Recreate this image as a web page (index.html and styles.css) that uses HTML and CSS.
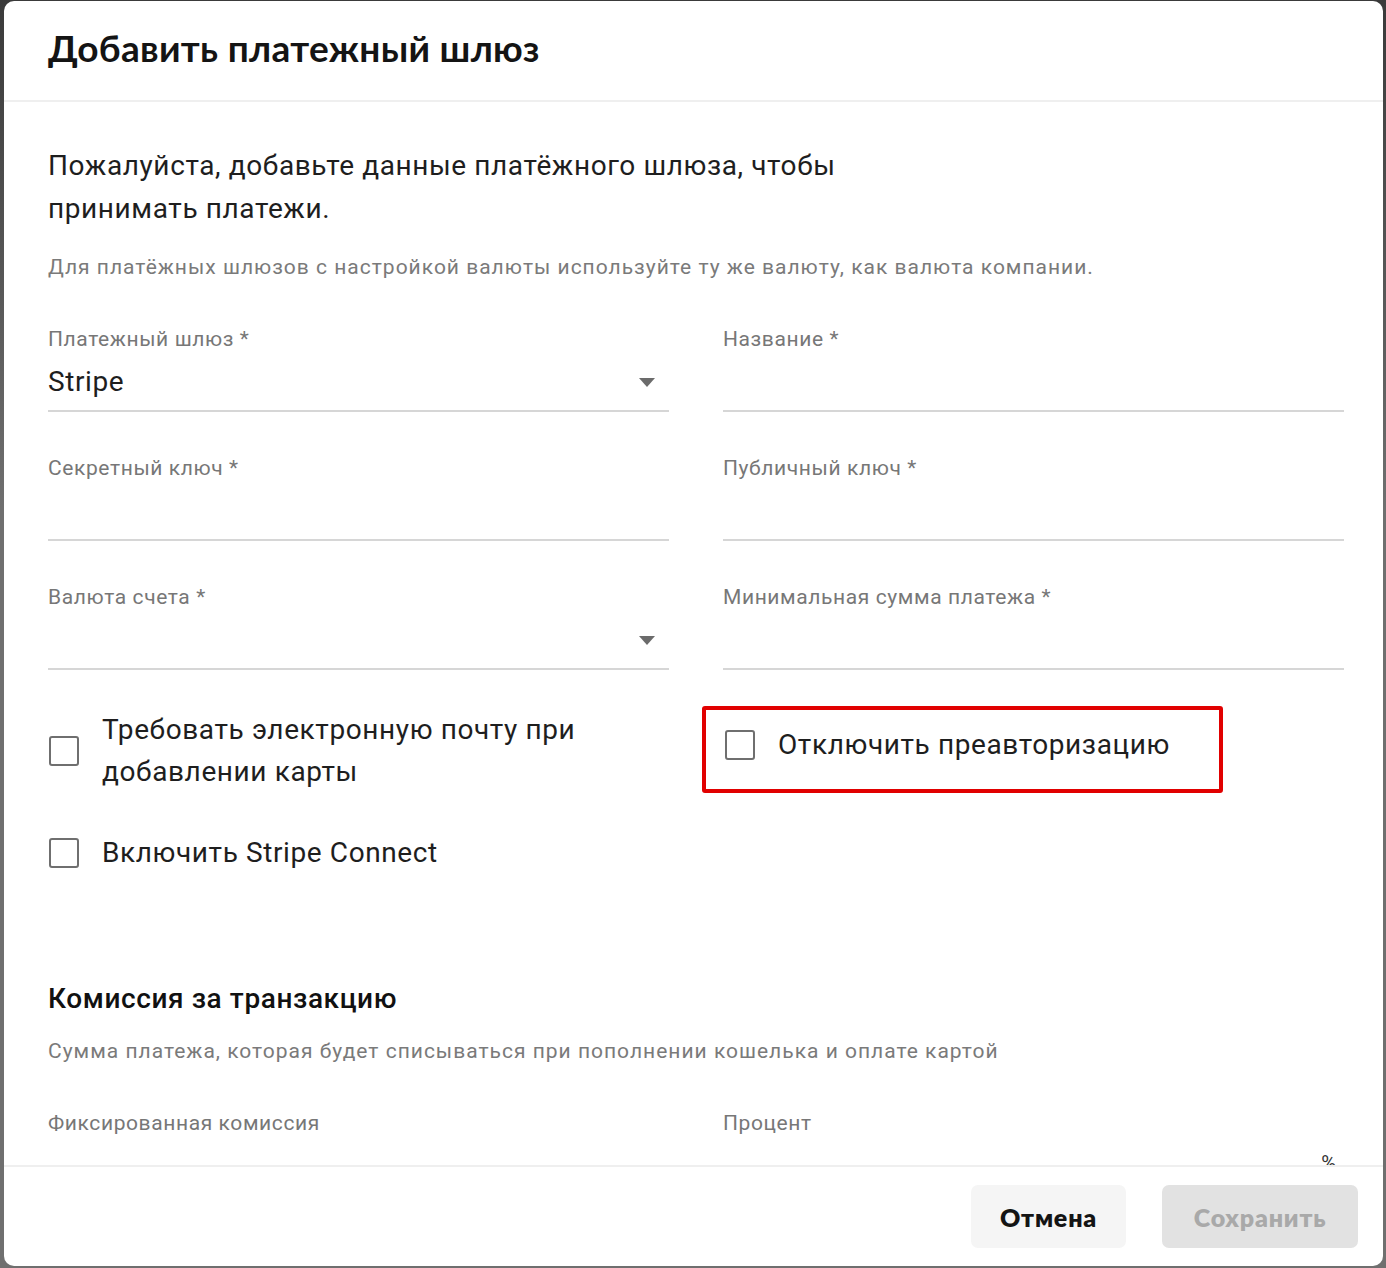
FILE: index.html
```html
<!DOCTYPE html>
<html lang="ru">
<head>
<meta charset="utf-8">
<title>Добавить платежный шлюз</title>
<link rel="stylesheet" href="styles.css">
</head>
<body>
<div class="dialog">
  <header class="dlg-head">
    <h1 class="dlg-title">Добавить платежный шлюз</h1>
  </header>
  <main class="dlg-body">
    <p class="intro">Пожалуйста, добавьте данные платёжного шлюза, чтобы<br>принимать платежи.</p>
    <p class="note">Для платёжных шлюзов с настройкой валюты используйте ту же валюту, как валюта компании.</p>

    <div class="grid fields">
      <div class="field">
        <div class="label">Платежный шлюз *</div>
        <div class="input select"><span class="value">Stripe</span><span class="caret"></span></div>
      </div>
      <div class="field">
        <div class="label">Название *</div>
        <div class="input"></div>
      </div>
      <div class="field">
        <div class="label">Секретный ключ *</div>
        <div class="input"></div>
      </div>
      <div class="field">
        <div class="label">Публичный ключ *</div>
        <div class="input"></div>
      </div>
      <div class="field">
        <div class="label">Валюта счета *</div>
        <div class="input select"><span class="value"></span><span class="caret"></span></div>
      </div>
      <div class="field">
        <div class="label">Минимальная сумма платежа *</div>
        <div class="input"></div>
      </div>
    </div>

    <div class="grid checks">
      <div class="check-col">
        <label class="check"><span class="box"></span><span class="check-text">Требовать электронную почту при<br>добавлении карты</span></label>
        <label class="check second"><span class="box"></span><span class="check-text">Включить Stripe Connect</span></label>
      </div>
      <div class="check-col">
        <div class="highlight">
          <label class="check"><span class="box"></span><span class="check-text">Отключить преавторизацию</span></label>
        </div>
      </div>
    </div>

    <h2 class="section-title">Комиссия за транзакцию</h2>
    <p class="note section-note">Сумма платежа, которая будет списываться при пополнении кошелька и оплате картой</p>

    <div class="grid fields fee">
      <div class="field">
        <div class="label">Фиксированная комиссия</div>
        <div class="input"></div>
      </div>
      <div class="field">
        <div class="label">Процент</div>
        <div class="input suffixed"><span class="suffix">%</span></div>
      </div>
    </div>
  </main>
  <footer class="dlg-foot">
    <button class="btn btn-cancel" type="button">Отмена</button>
    <button class="btn btn-save" type="button" disabled>Сохранить</button>
  </footer>
</div>
</body>
</html>
```

FILE: styles.css
```css
html, body {
  margin: 0;
  padding: 0;
}
body {
  background: linear-gradient(180deg, #3a3a3a 0%, #6f6f6f 40%, #6f6f6f 100%);
  font-family: Roboto, "Noto Sans", Arial, sans-serif;
  color: #1f1f1f;
  width: 1386px;
  height: 1268px;
  overflow: hidden;
}
.dialog {
  margin: 1px 3px 0 4px;
  height: 1265px;
  background: #fff;
  border-radius: 10px;
  display: flex;
  flex-direction: column;
  overflow: hidden;
}
.dlg-head {
  height: 99px;
  flex: none;
  border-bottom: 2px solid #efefef;
  padding-left: 44px;
  display: flex;
  align-items: flex-start;
}
.dlg-title {
  margin: 25px 0 0;
  font-family: Lato, "Noto Sans", sans-serif;
  font-weight: 700;
  font-size: 37px;
  line-height: 44px;
  color: #141414;
  letter-spacing: 0.3px;
}
.dlg-body {
  flex: 1;
  overflow: hidden;
  padding: 0 40px 0 44px;
}
.intro {
  margin: 42px 0 0;
  font-size: 28px;
  line-height: 43px;
  letter-spacing: 0.6px;
  color: #1e1e1e;
}
.note {
  margin: 23px 0 0;
  font-size: 21px;
  line-height: 28px;
  color: #7a7a7a;
  letter-spacing: 1px;
}
.grid {
  display: grid;
  grid-template-columns: 621px 621px;
  column-gap: 54px;
}
.fields {
  margin-top: 46px;
  row-gap: 44px;
}
.label {
  font-size: 21px;
  line-height: 24px;
  color: #777;
  letter-spacing: 0.6px;
}
.input {
  height: 59px;
  border-bottom: 2px solid #d6d6d6;
  box-sizing: content-box;
  display: flex;
  align-items: flex-start;
  position: relative;
}
.value {
  padding-top: 13px;
  font-size: 28px;
  line-height: 36px;
  letter-spacing: 0.6px;
  color: #1e1e1e;
  flex: 1;
}
.caret {
  width: 0;
  height: 0;
  border-left: 8px solid transparent;
  border-right: 8px solid transparent;
  border-top: 9px solid #6b6b6b;
  margin: 27px 14px 0 0;
}
.checks {
  margin-top: 39px;
}
.check-col {
  display: flex;
  flex-direction: column;
  align-items: flex-start;
}
.check {
  display: flex;
  align-items: center;
  gap: 23px;
  font-size: 28px;
  line-height: 42px;
  letter-spacing: 0.6px;
  color: #1e1e1e;
  cursor: pointer;
}
.check.second {
  margin-top: 39px;
}
.box {
  width: 26px;
  height: 26px;
  border: 2.5px solid #6f6f6f;
  border-radius: 3px;
  flex: none;
  margin-left: 1px;
}
.highlight {
  margin: -3px 0 0 -21px;
  border: 4px solid #e10000;
  border-radius: 3px;
  padding: 14px 49px 23px 18px;
}
.section-title {
  margin: 107px 0 0;
  font-size: 28px;
  line-height: 36px;
  letter-spacing: 0.6px;
  font-weight: 500;
  color: #111;
}
.section-note {
  margin-top: 20px;
}
.fee {
  margin-top: 46px;
}
.suffixed {
  justify-content: flex-end;
}
.suffix {
  padding-top: 16px;
  padding-right: 8px;
  font-size: 20px;
  line-height: 24px;
  color: #333;
}
.dlg-foot {
  flex: none;
  height: 101px;
  border-top: 2px solid #efefef;
  display: flex;
  justify-content: flex-end;
  align-items: flex-start;
  gap: 36px;
  padding: 18px 25px 0 0;
  box-sizing: border-box;
}
.btn {
  height: 63px;
  border: none;
  border-radius: 7px;
  font-family: Lato, "Noto Sans", sans-serif;
  font-weight: 800;
  font-size: 25px;
  letter-spacing: 0.8px;
  padding: 0;
}
.btn-cancel {
  width: 155px;
  background: #f5f5f5;
  color: #141414;
}
.btn-save {
  width: 196px;
  background: #e2e2e2;
  color: #a9a9a9;
}
```
